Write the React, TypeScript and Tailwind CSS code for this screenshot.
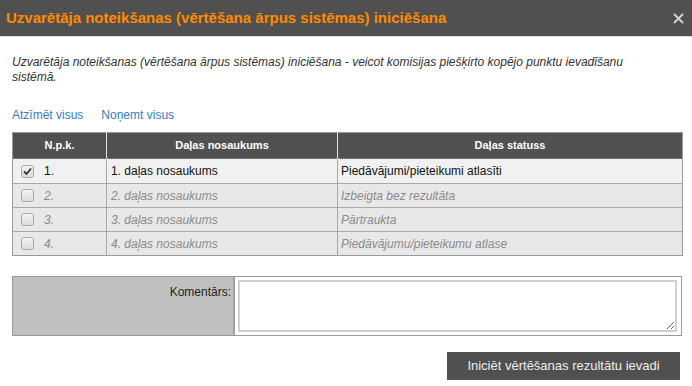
import React from "react";

const rows = [
  { n: "1.", name: "1. daļas nosaukums", status: "Piedāvājumi/pieteikumi atlasīti", active: true },
  { n: "2.", name: "2. daļas nosaukums", status: "Izbeigta bez rezultāta", active: false },
  { n: "3.", name: "3. daļas nosaukums", status: "Pārtraukta", active: false },
  { n: "4.", name: "4. daļas nosaukums", status: "Piedāvājumu/pieteikumu atlase", active: false },
];

function Check({ checked }: { checked: boolean }) {
  return (
    <span className="inline-flex w-[13px] h-[13px] rounded-[3px] border border-[#a9a9a9] bg-gradient-to-b from-[#f4f4f4] to-[#dcdcdc] items-center justify-center">
      {checked && (
        <svg width="9" height="9" viewBox="0 0 9 9">
          <path d="M1 4.5 L3.5 7 L8 1.5" stroke="#333" strokeWidth="1.8" fill="none" />
        </svg>
      )}
    </span>
  );
}

export default function App() {
  return (
    <div className="w-[692px] h-[386px] bg-white font-['Liberation_Sans',Arial,sans-serif] overflow-hidden">
      <div className="h-[37px] bg-[#505050] border-b border-[#d8d8d8] flex items-center justify-between pl-[6px] pr-[8px]">
        <span className="text-[#ff8a00] font-bold text-[15px]">
          Uzvarētāja noteikšanas (vērtēšana ārpus sistēmas) iniciēšana
        </span>
        <svg width="11" height="11" viewBox="0 0 11 11" className="mt-[1px]">
          <path d="M1 1 L10 10 M10 1 L1 10" stroke="#d4d4d4" strokeWidth="1.8" />
        </svg>
      </div>

      <div className="px-[12px] pt-[18px]">
        <p className="italic text-[12px] leading-[15px] text-[#333] pr-[30px]">
          Uzvarētāja noteikšanas (vērtēšana ārpus sistēmas) iniciēšana - veicot komisijas piešķirto kopējo punktu ievadīšanu sistēmā.
        </p>

        <div className="flex gap-[18px] mt-[21px] text-[12px] text-[#3a7cc0]">
          <span>Atzīmēt visus</span>
          <span>Noņemt visus</span>
        </div>

        <table className="mt-[8px] w-[670px] border-collapse border border-[#9a9a9a] text-[12px] table-fixed">
          <colgroup>
            <col className="w-[94px]" />
            <col className="w-[231px]" />
            <col className="w-[345px]" />
          </colgroup>
          <thead>
            <tr className="bg-[#515151] text-white text-[11px] font-bold h-[26px]">
              <th className="border-r border-[#e0e0e0] font-bold">N.p.k.</th>
              <th className="border-r border-[#e0e0e0] font-bold">Daļas nosaukums</th>
              <th className="font-bold">Daļas statuss</th>
            </tr>
          </thead>
          <tbody>
            {rows.map((r, i) => (
              <tr
                key={i}
                className={
                  r.active
                    ? "h-[25px] bg-[#f1f1f1] text-[#111] border border-dotted border-[#8a8a8a]"
                    : "h-[24px] bg-[#e8e8e8] text-[#8a8a8a] italic border-t border-[#a8a8a8]"
                }
              >
                <td className="border-r border-[#a8a8a8] pl-[8px]">
                  <div className="flex items-center gap-[10px]">
                    <Check checked={r.active} />
                    <span>{r.n}</span>
                  </div>
                </td>
                <td className="border-r border-[#a8a8a8] pl-[4px]">{r.name}</td>
                <td className="pl-[3px]">{r.status}</td>
              </tr>
            ))}
          </tbody>
        </table>

        <div className="mt-[20px] w-[670px] h-[60px] flex border border-[#9a9a9a]">
          <div className="w-[222px] bg-[#c0c0c0] border-r-2 border-[#a0a0a0] text-[12px] text-[#222] text-right pr-[2px] pt-[6px]">
            Komentārs:
          </div>
          <div className="flex-1 p-[3px] pr-[4px]">
            <textarea className="w-full h-full border-2 border-[#d0d0d0] resize-y block outline-none" />
          </div>
        </div>

        <div className="flex justify-end mt-[16px]">
          <button className="w-[233px] h-[28px] bg-[#505050] text-[#eeeeee] text-[13px]">
            Iniciēt vērtēšanas rezultātu ievadi
          </button>
        </div>
      </div>
    </div>
  );
}
